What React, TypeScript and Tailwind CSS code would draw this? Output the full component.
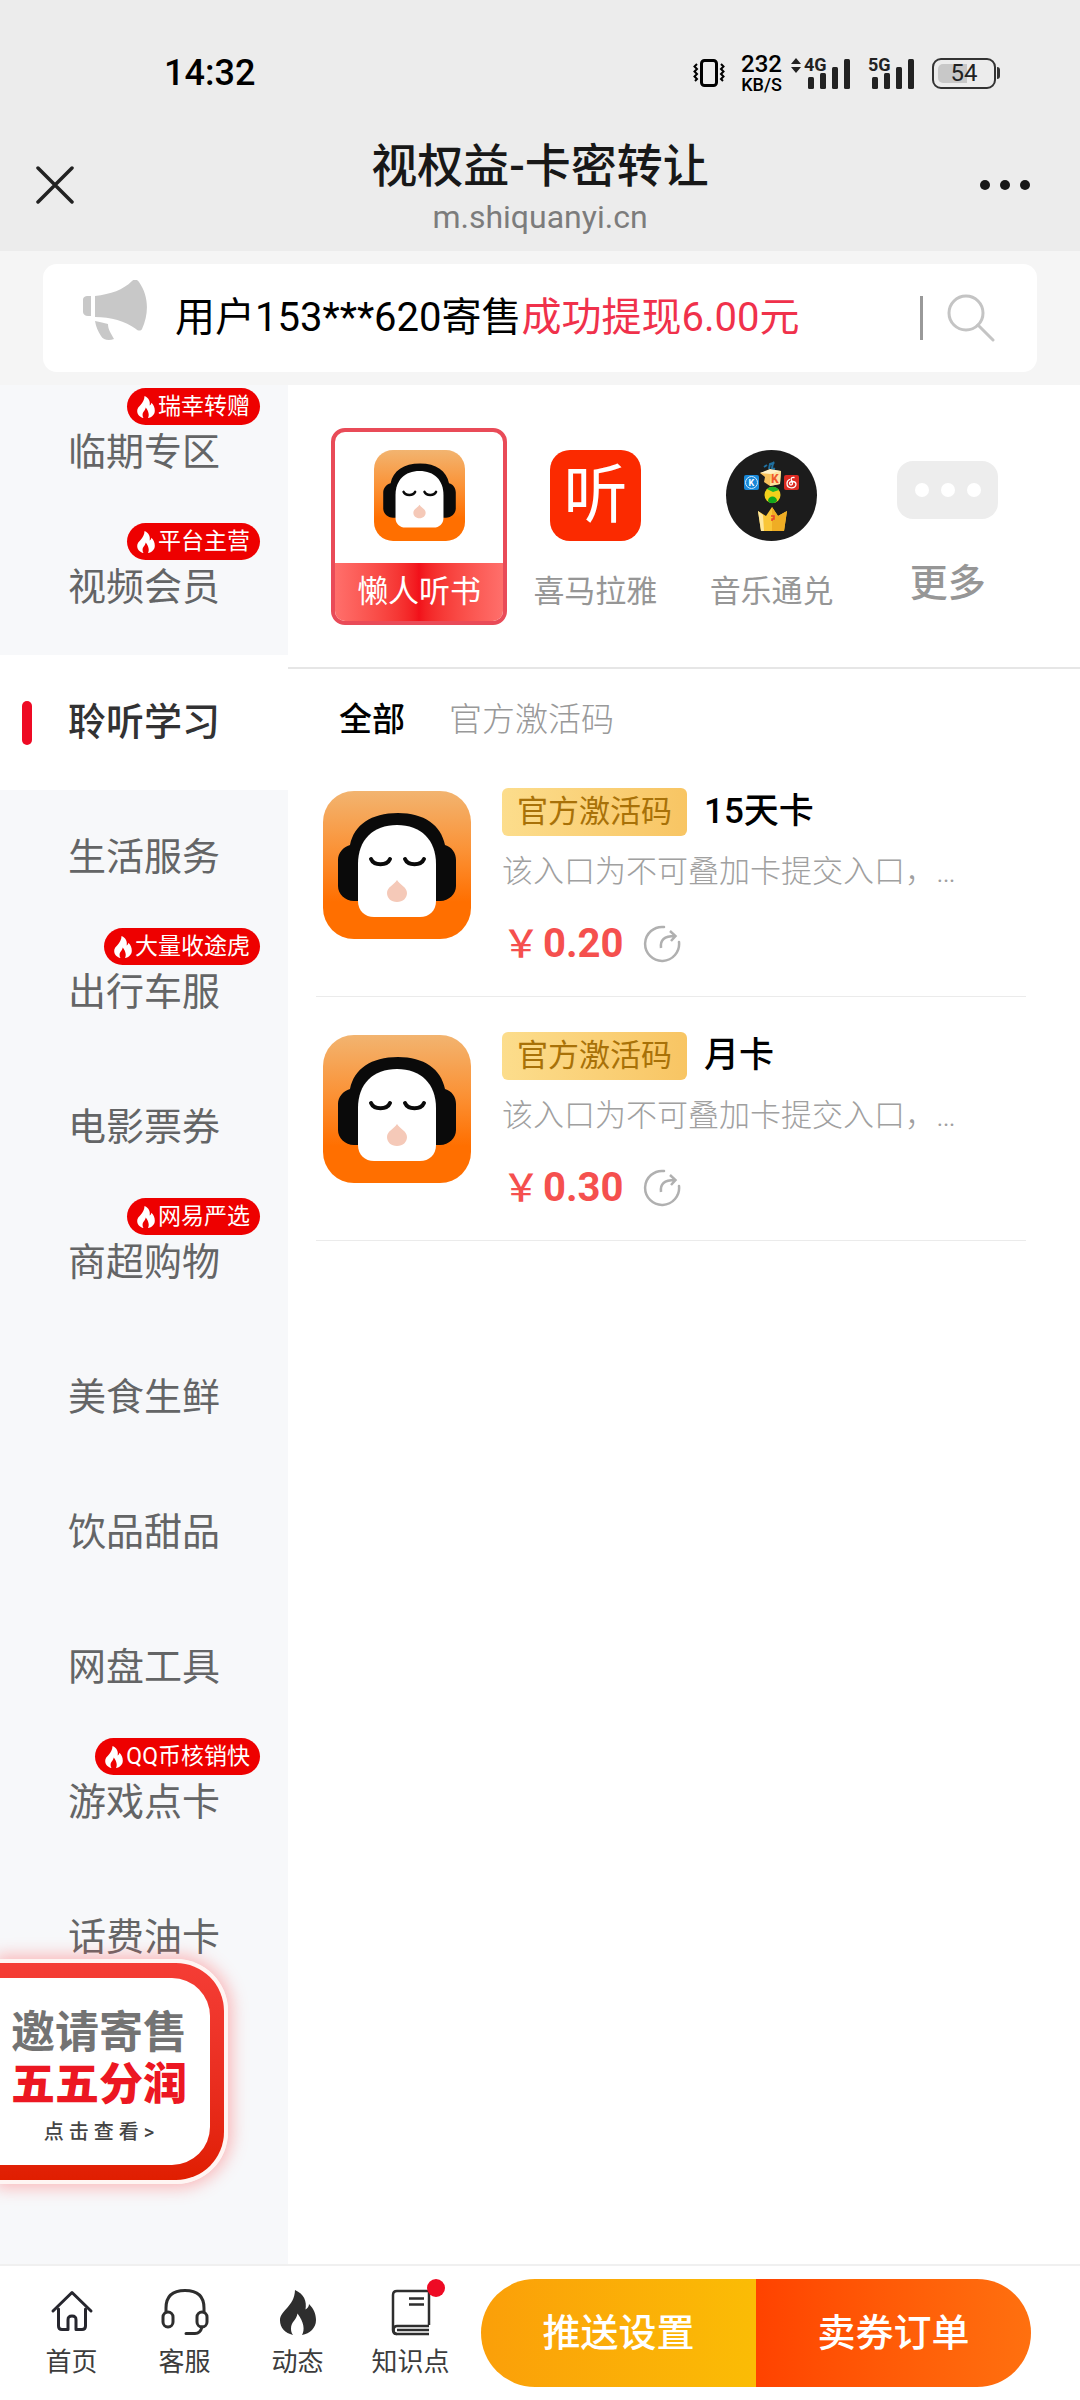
import { useState } from "react";

const categories = [
  { name: "临期专区", badge: "瑞幸转赠" },
  { name: "视频会员", badge: "平台主营" },
  { name: "聆听学习" },
  { name: "生活服务" },
  { name: "出行车服", badge: "大量收途虎" },
  { name: "电影票券" },
  { name: "商超购物", badge: "网易严选" },
  { name: "美食生鲜" },
  { name: "饮品甜品" },
  { name: "网盘工具" },
  { name: "游戏点卡", badge: "QQ币核销快" },
  { name: "话费油卡" },
];

const brands = [
  { name: "懒人听书", icon: <LazyLogo className="size-[91px]" /> },
  { name: "喜马拉雅", icon: <ListenLogo /> },
  { name: "音乐通兑", icon: <MusicLogo /> },
];

const products = [
  { title: "15天卡", price: "0.20" },
  { title: "月卡", price: "0.30" },
];

const tabs = ["全部", "官方激活码"];

function FlameIcon({ className }: { className?: string }) {
  return (
    <svg viewBox="0 0 36 45" className={className} fill="currentColor">
      <path d="M15 0C24 4 27 11 25.500 19.500C27.500 18.500 29 16.500 29 14C34 19 36 24.500 36 30C36 38 30 43.500 22 45C25 40 24 32 17.500 23.500C16.500 30 11 32 11 38.500C11 41 11.500 43 13 45C5 43 0 37.500 0 30.500C0 20 14.500 17 15 0Z" />
    </svg>
  );
}

function LazyLogo({ className }: { className?: string }) {
  return (
    <svg viewBox="0 0 148 148" className={className}>
      <defs>
        <linearGradient id="lazyBg" x1="0" y1="0" x2="0" y2="1">
          <stop offset="0" stopColor="#f2b470" />
          <stop offset="0.4" stopColor="#fb9236" />
          <stop offset="0.75" stopColor="#ff6f00" />
        </linearGradient>
      </defs>
      <rect width="148" height="148" rx="31" fill="url(#lazyBg)" />
      <path
        d="M27 54C31 34 48 22 75 22C101 22 118 34 122 54C129 56 133 62 133 69V95C133 103 126 110 117 110H31C22 110 15 103 15 95V69C15 62 20 56 27 54Z"
        fill="#0a0a0a"
      />
      <path
        d="M35 73C35 49 50 34 74 34C98 34 113 49 113 73V110C113 120 106 126 97 126H51C42 126 35 120 35 110Z"
        fill="#fff"
      />
      <path
        d="M48 68C51 75 64 75 67 68M82 68C85 75 98 75 101 68"
        fill="none"
        stroke="#0a0a0a"
        strokeWidth="4"
        strokeLinecap="round"
      />
      <path
        d="M74 89C77 94 84 96 84 102C84 107 80 111 74 111C68 111 64 107 64 102C64 96 71 94 74 89Z"
        fill="#f5c9b8"
      />
    </svg>
  );
}

function ListenLogo() {
  return (
    <span className="flex size-[91px] items-center justify-center rounded-[20px] bg-[#fb2a00] text-[64px] leading-none text-white">
      听
    </span>
  );
}

function MusicLogo() {
  return (
    <svg viewBox="0 0 91 91" className="size-[91px]">
      <circle cx="45.500" cy="45.500" r="45.500" fill="#1c1c1c" />
      <rect x="18" y="25" width="15" height="15" rx="2" fill="#1787d8" />
      <circle cx="25.500" cy="32.500" r="6" fill="none" stroke="#cfe9fb" />
      <text x="22.500" y="36" fontSize="9" fontWeight="700" fill="#fff">
        K
      </text>
      <path
        d="M38 17L41 15M43 19L44 14L47 13L46 18L49 19M47 14L48 12"
        fill="none"
        stroke="#1f6f9f"
        strokeWidth="2"
      />
      <path d="M34 23L44 20L55 21L54 34L44 36L38 32L39 27Z" fill="#f7c15c" />
      <path d="M45 24L55 21L54 34L44 36Z" fill="#fde3a0" />
      <path d="M34 23L44 19L55 21L45 24Z" fill="#fff0c4" />
      <text x="45" y="33" fontSize="12" fontWeight="800" fill="#f0592a">
        K
      </text>
      <rect x="58" y="25" width="15" height="15" rx="2" fill="#dc2a22" />
      <path
        d="M68 27.500C66 27 65 28 65.300 29.500L66.500 33.500C66.500 35.500 63.500 35.500 63.500 33.500C63.500 31 69.500 30.500 70 34C70 39.500 61 39 61 33.500C61 31.500 62 30 63.500 29.500"
        fill="none"
        stroke="#fff"
        strokeWidth="1.300"
        strokeLinecap="round"
      />
      <circle cx="46.500" cy="45" r="8" fill="#f2d01b" />
      <path d="M41 39C44 36 50 36 53 40L47 42Z" fill="#20b52a" />
      <path d="M42 51C42 45 51 45 51 51C48 54 44 54 42 51Z" fill="#12a81d" />
      <path d="M32 61L40 66L46 57L52 66L61 61L58 81H35Z" fill="#f9c638" />
      <path d="M46 57L52 66L61 61L58 81H46Z" fill="#efad24" />
      <path d="M32 61L37 65L38 81H35Z" fill="#fde7a0" />
      <path d="M45 66H48V69H46V71" fill="none" stroke="#e8432c" strokeWidth="1.500" />
    </svg>
  );
}

function Signal({ label }: { label: string }) {
  return (
    <span className="relative block h-[34px] w-[48px]">
      <svg viewBox="0 0 48 34" className="size-full" fill="#222">
        <rect x="4" y="21" width="6" height="12" rx="1.500" />
        <rect x="16" y="17" width="6" height="16" rx="1.500" />
        <rect x="28" y="11" width="6" height="22" rx="1.500" />
        <rect x="40" y="3" width="6" height="30" rx="1.500" />
      </svg>
      <span className="absolute top-0 left-0 bg-[#ececec] text-[18px] leading-[17px] font-bold text-[#222]">
        {label}
      </span>
    </span>
  );
}

function StatusBar() {
  return (
    <div className="flex h-[119px] items-center justify-between pt-[27px] pr-20 pl-[164px]">
      <span className="text-[36px] font-medium text-black">14:32</span>
      <div className="flex items-center">
        <svg viewBox="0 0 32 30" className="h-[30px] w-8" fill="none" stroke="#000">
          <rect x="8.500" y="2.500" width="15" height="25" rx="3" strokeWidth="3" />
          <path
            d="M4 6L1.500 8.500L4 11L1.500 13.500L4 16L1.500 18.500L4 21L2 23M28 6L30.500 8.500L28 11L30.500 13.500L28 16L30.500 18.500L28 21L30 23"
            strokeWidth="2"
          />
        </svg>
        <div className="ml-4 flex flex-col items-center font-medium text-black">
          <span className="text-[24px] leading-6">232</span>
          <span className="text-[18px] leading-[18px]">KB/S</span>
        </div>
        <svg viewBox="0 0 12 34" className="mr-[2px] ml-2 h-[34px] w-3" fill="#222">
          <path d="M6 2L11 8H1ZM6 17L11 11H1Z" />
        </svg>
        <div className="mr-4 flex gap-4">
          <Signal label="4G" />
          <Signal label="5G" />
        </div>
        <div className="flex items-center">
          <span className="relative flex h-[31px] w-[64px] items-center justify-center rounded-[9px] border-[2px] border-[#333]">
            <span className="absolute inset-y-1 left-1 w-[29px] rounded-l-[5px] bg-[#c8c8c8]" />
            <span className="relative text-[24px] leading-none text-[#222]">54</span>
          </span>
          <span className="ml-px h-3 w-[3px] rounded-r bg-[#333]" />
        </div>
      </div>
    </div>
  );
}

function TitleBar() {
  return (
    <div className="grid h-[132px] grid-cols-[1fr_auto_1fr] items-center px-9">
      <button aria-label="关闭" className="justify-self-start">
        <svg viewBox="0 0 38 38" className="size-[38px]" stroke="#222" strokeWidth="3.500" strokeLinecap="round">
          <path d="M2 2L36 36M36 2L2 36" />
        </svg>
      </button>
      <div className="pt-1 text-center">
        <h1 className="text-[46px] leading-[60px] font-medium text-[#181818]">视权益-卡密转让</h1>
        <p className="text-[32px] leading-[42px] text-[#7c7c7c]">m.shiquanyi.cn</p>
      </div>
      <button aria-label="更多操作" className="mr-[14px] flex gap-[10px] justify-self-end">
        <span className="size-[10px] rounded-full bg-[#181818]" />
        <span className="size-[10px] rounded-full bg-[#181818]" />
        <span className="size-[10px] rounded-full bg-[#181818]" />
      </button>
    </div>
  );
}

function NoticeBar() {
  return (
    <div className="bg-[#f5f5f5] px-[43px] py-[13px]">
      <div className="flex h-[108px] items-center rounded-[14px] bg-white pr-[42px] pl-10">
        <svg viewBox="0 0 64 60" className="mb-4 h-[60px] w-16 shrink-0" fill="#c8c8c8">
          <path d="M8 16V36H5C2 36 0 34 0 32V20C0 17 2 16 5 16Z" />
          <path d="M12 16C28 14 40 10 49 1C51 -1 54 -1 56 2C66 16 66 34 59 49C58 51 55 51 53 49C42 41 28 37 12 37Z" />
          <path d="M12 41C17 42 21 43 25 44C25 50 28 53 31 59C26 61 20 60 18 56C15 51 13 47 12 41Z" />
        </svg>
        <p className="ml-7 flex-1 truncate text-[40px] leading-[56px] text-black">
          用户153***620寄售<span className="text-[#f0314b]">成功提现6.00元</span>
        </p>
        <span className="h-11 w-[3px] bg-[#999]" />
        <button aria-label="搜索" className="ml-6">
          <svg viewBox="0 0 48 48" className="size-12" fill="none" stroke="#c4c4c4" strokeWidth="3">
            <circle cx="19" cy="19" r="17" />
            <path d="M31 31L46 46" strokeLinecap="round" />
          </svg>
        </button>
      </div>
    </div>
  );
}

function Sidebar() {
  const [active, setActive] = useState("聆听学习");

  return (
    <aside className="w-72 shrink-0 bg-[#f7f8fa]">
      {categories.map((item) => (
        <button
          key={item.name}
          onClick={() => setActive(item.name)}
          className={`relative flex h-[135px] w-full items-center justify-center text-[38px] ${
            active === item.name ? "bg-white font-medium text-[#323233]" : "text-[#646566]"
          }`}
        >
          {active === item.name && (
            <span className="absolute top-[46px] left-[22px] h-11 w-[10px] rounded-full bg-[#ee0a24]" />
          )}
          {item.name}
          {item.badge && (
            <span className="absolute top-[3px] right-7 flex h-[37px] items-center gap-[3px] rounded-full bg-[#ee0000] px-[10px] text-[23px] leading-none text-white">
              <FlameIcon className="h-[22px] w-[18px]" />
              {item.badge}
            </span>
          )}
        </button>
      ))}
    </aside>
  );
}

function BrandRow() {
  const [active, setActive] = useState("懒人听书");

  return (
    <div className="grid grid-cols-4 border-b-2 border-[#e6e6e6] pt-[43px] pr-11 pb-[42px] pl-[43px]">
      {brands.map((brand) => (
        <button
          key={brand.name}
          onClick={() => setActive(brand.name)}
          className={`flex h-[197px] flex-col items-center justify-between overflow-hidden rounded-[14px] border-4 pt-[18px] ${
            active === brand.name ? "border-[#e94b58]" : "border-transparent"
          }`}
        >
          {brand.icon}
          <span
            className={`w-full text-center text-[31px] leading-[58px] ${
              active === brand.name
                ? "bg-linear-to-r from-[#ff6f6b] via-[#f2101a] to-[#ff6f6b] text-white"
                : "text-[#969696]"
            }`}
          >
            {brand.name}
          </span>
        </button>
      ))}
      <button className="flex flex-col items-center pt-[33px] text-[#969696]">
        <span className="flex h-[58px] w-[101px] items-center justify-center gap-3 rounded-[16px] bg-[#ededed]">
          <span className="size-[14px] rounded-full bg-white" />
          <span className="size-[14px] rounded-full bg-white" />
          <span className="size-[14px] rounded-full bg-white" />
        </span>
        <span className="mt-9 text-[38px] leading-[56px] font-medium">更多</span>
      </button>
    </div>
  );
}

function ProductItem({ title, price }: { title: string; price: string }) {
  return (
    <li className="flex items-start border-b border-[#ebebeb] pt-[35px] pb-[30px] pl-[7px]">
      <LazyLogo className="mt-[3px] size-[148px] shrink-0" />
      <div className="ml-[31px] min-w-0 flex-1">
        <div className="flex h-12 items-center">
          <span className="flex h-12 items-center rounded-[6px] bg-linear-to-r from-[#fcdd8c] to-[#f8c563] px-[15px] text-[31px] text-[#a87108]">
            官方激活码
          </span>
          <h2 className="ml-[17px] text-[35px] font-medium text-black">{title}</h2>
        </div>
        <p className="mt-[14px] truncate text-[31px] leading-[44px] font-light text-[#a0a0a0]">
          该入口为不可叠加卡提交入口，…
        </p>
        <div className="mt-7 flex h-11 items-center text-[#f5504e]">
          <span className="text-[38px] font-medium">￥</span>
          <span className="ml-[3px] text-[40px] font-bold">{price}</span>
          <button aria-label="分享" className="ml-5">
            <svg viewBox="0 0 38 38" className="size-[38px]" fill="none" stroke="#b0b0b0" strokeWidth="2.500">
              <path d="M21 2A17 17 0 1 0 36 17" strokeLinecap="round" />
              <path d="M18 23C17 15 21 11 32 11M27 6L32.500 11L28 16" />
            </svg>
          </button>
        </div>
      </div>
    </li>
  );
}

function ProductPanel() {
  const [tab, setTab] = useState("全部");

  return (
    <main className="min-w-0 flex-1 bg-white">
      <BrandRow />
      <div className="flex gap-11 pt-[26px] pb-2 pl-[51px] text-[33px] leading-[50px]">
        {tabs.map((name) => (
          <button
            key={name}
            onClick={() => setTab(name)}
            className={tab === name ? "font-medium text-black" : "font-light text-[#999]"}
          >
            {name}
          </button>
        ))}
      </div>
      <ul className="mr-[54px] ml-7">
        {products.map((product) => (
          <ProductItem key={product.title} {...product} />
        ))}
      </ul>
    </main>
  );
}

function InviteBanner() {
  return (
    <a
      href="#invite"
      className="fixed bottom-[216px] left-0 block w-[228px] rounded-r-[52px] border-y-4 border-r-4 border-[#fff5f3] shadow-[0_0_16px_4px_rgba(255,90,90,0.4)]"
    >
      <div className="rounded-r-[48px] bg-linear-to-b from-[#f53d35] to-[#e01e00] py-[15px] pr-[14px]">
        <div className="flex h-[187px] flex-col items-center justify-center rounded-r-[38px] bg-white pt-4 pr-4 pl-1">
          <span className="text-[44px] leading-[52px] font-bold text-[#737373]">邀请寄售</span>
          <span className="text-[44px] leading-[52px] font-black text-[#ec1722]">五五分润</span>
          <span className="text-[20px] leading-[42px] font-medium text-[#444]">点 击 查 看 &gt;</span>
        </div>
      </div>
    </a>
  );
}

function BottomBar() {
  return (
    <footer className="fixed inset-x-0 bottom-0 flex h-[136px] items-center border-t-2 border-[#f0f0f0] bg-white pr-[49px] pl-[15px]">
      <nav className="flex pt-[2px] text-[26px] leading-9 text-[#3c3c3c]">
        <a href="#home" className="flex w-[113px] flex-col items-center gap-2">
          <svg
            viewBox="0 0 48 48"
            className="size-12"
            fill="none"
            stroke="#26262e"
            strokeWidth="3"
            strokeLinecap="round"
            strokeLinejoin="round"
          >
            <path d="M5 23L24 4.500L43 23" />
            <path d="M10.500 21V38C10.500 40 11.500 41.500 14 41.500H20V32C20 29 21 28 24 28C27 28 28 29 28 32V41.500H34C36.500 41.500 37.500 40 37.500 38V21" />
          </svg>
          首页
        </a>
        <a href="#service" className="flex w-[113px] flex-col items-center gap-2">
          <svg
            viewBox="0 0 48 48"
            className="size-12"
            fill="none"
            stroke="#2e2e2e"
            strokeWidth="3"
            strokeLinecap="round"
          >
            <path d="M5 24V20C5 8 12 2.500 24 2.500C36 2.500 43 8 43 20V24" />
            <rect x="2" y="24" width="10" height="15" rx="5" />
            <rect x="36" y="24" width="10" height="15" rx="5" />
            <path d="M41 39C40 43 38 45.500 34 45.500H25" />
          </svg>
          客服
        </a>
        <a href="#news" className="flex w-[113px] flex-col items-center gap-2">
          <span className="flex size-12 items-center justify-center text-[#2e2e2e]">
            <FlameIcon className="h-[45px] w-9" />
          </span>
          动态
        </a>
        <a href="#knowledge" className="relative flex w-[113px] flex-col items-center gap-2">
          <svg viewBox="0 0 48 48" className="size-12" fill="none" stroke="#2e2e2e" strokeWidth="2.500">
            <path d="M42 37V3H10C7.500 3 6 4.500 6 7V42C6 45 8 46 10 46H42" />
            <path d="M42 38H10C5.500 38 5.500 46 10 46" />
            <path d="M10 42H42M22 10.500H37M22 16.500H37" />
          </svg>
          知识点
          <span className="absolute -top-[9px] right-[22px] size-[18px] rounded-full bg-[#ee0a24]" />
        </a>
      </nav>
      <div className="ml-[14px] flex h-[108px] flex-1 overflow-hidden rounded-full text-[38px] font-medium text-white">
        <button className="flex-1 bg-linear-to-r from-[#fb9f09] to-[#fbbc05]">推送设置</button>
        <button className="flex-1 bg-linear-to-r from-[#ff4200] to-[#ff700f]">卖券订单</button>
      </div>
    </footer>
  );
}

export default function App() {
  return (
    <div className="flex min-h-screen flex-col bg-white pb-[136px] [font-family:Roboto,'Noto_Sans_CJK_SC',sans-serif]">
      <header className="bg-[#ececec]">
        <StatusBar />
        <TitleBar />
      </header>
      <NoticeBar />
      <div className="flex flex-1">
        <Sidebar />
        <ProductPanel />
      </div>
      <InviteBanner />
      <BottomBar />
    </div>
  );
}
